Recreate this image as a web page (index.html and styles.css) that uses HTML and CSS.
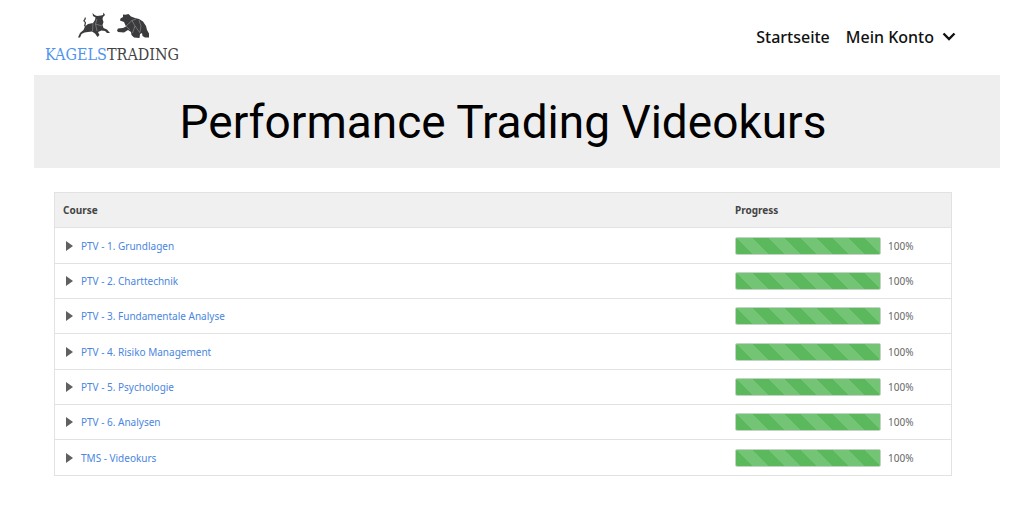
FILE: index.html
```html
<!DOCTYPE html>
<html lang="de">
<head>
<meta charset="utf-8">
<title>Performance Trading Videokurs</title>
<meta name="viewport" content="width=device-width, initial-scale=1">
<link rel="stylesheet" href="styles.css">
</head>
<body>
<div class="page">
  <header class="site-header">
    <a class="logo" href="#">
      <svg class="logo-mark" viewBox="0 0 84 34" aria-hidden="true">
        <g fill="#3b3b3d">
          <path d="M6 29.500 8 25 11.500 22 13 18.500 16 16 21 15 23 12 23.500 9.500 21 8 20.500 5 22.500 7 25 8 29 7.500 31 7 31.500 4.500 33 7 31 9 30.500 11 31.500 14 30.500 17 31.500 20 35 21.500 38 25 35 25 33 23 29.500 22.500 26 24 27.500 27 25.500 29 23 25.500 20 23.500 16 24 12.500 24.500 9.500 26 8 29.500Z"/>
          <path d="M14 18C10.500 18.500 15.500 15 12.500 13.500 10.500 12 14.500 12 13 9.500" fill="none" stroke="#3b3b3d" stroke-width="1.200"/>
          <path d="M45 22.500 46 20.500 51 20 54 18.500 52 14 48 12.500 48.500 10.500 51 9 51 6.500 53.500 6.800 56.500 6 59 8.500 63 10 67 11 71 13.500 74 18 75 22 77 25.500 77 29.500 73 29.500 70.500 28 70 25 68 26 67.500 30 62 29.500 59.500 27 59 24 56 22 52 24.500 46 24Z"/>
        </g>
        <g fill="none" stroke="#a8a8a8" stroke-width=".5">
          <path d="M21 15 20.500 23M25 11 23.500 16 25 23M23.500 16 30 18"/>
          <path d="M54 18 60 12.500 64 11M60 12.500 63 18 60.500 25M63 18 68 25M67 12 69 18 68 24M54 18 58 22"/>
        </g>
      </svg>
      <span class="logo-text"><span class="logo-accent">KAGELS</span>TRADING</span>
    </a>
    <nav class="menu" aria-label="Hauptmenü">
      <a class="menu-item" href="#">Startseite</a>
      <button class="menu-item" type="button" aria-haspopup="true">Mein Konto
        <svg class="chevron" viewBox="0 0 14 10" aria-hidden="true"><path d="M1.500 1.500 7 7 12.500 1.500"/></svg>
      </button>
    </nav>
  </header>

  <h1 class="banner">Performance Trading Videokurs</h1>

  <main class="content">
    <table class="courses">
      <thead>
        <tr><th class="col-course" scope="col">Course</th><th scope="col">Progress</th></tr>
      </thead>
      <tbody>
        <tr><td><a class="course" href="#">PTV - 1. Grundlagen</a></td><td><div class="progress"><div class="track"><div class="bar" style="width:100%"></div></div>100%</div></td></tr>
        <tr><td><a class="course" href="#">PTV - 2. Charttechnik</a></td><td><div class="progress"><div class="track"><div class="bar" style="width:100%"></div></div>100%</div></td></tr>
        <tr><td><a class="course" href="#">PTV - 3. Fundamentale Analyse</a></td><td><div class="progress"><div class="track"><div class="bar" style="width:100%"></div></div>100%</div></td></tr>
        <tr><td><a class="course" href="#">PTV - 4. Risiko Management</a></td><td><div class="progress"><div class="track"><div class="bar" style="width:100%"></div></div>100%</div></td></tr>
        <tr><td><a class="course" href="#">PTV - 5. Psychologie</a></td><td><div class="progress"><div class="track"><div class="bar" style="width:100%"></div></div>100%</div></td></tr>
        <tr><td><a class="course" href="#">PTV - 6. Analysen</a></td><td><div class="progress"><div class="track"><div class="bar" style="width:100%"></div></div>100%</div></td></tr>
        <tr><td><a class="course" href="#">TMS - Videokurs</a></td><td><div class="progress"><div class="track"><div class="bar" style="width:100%"></div></div>100%</div></td></tr>
      </tbody>
    </table>
  </main>
</div>
</body>
</html>
```
FILE: styles.css
```css
* {
  box-sizing: border-box;
}

body {
  margin: 0;
  background: #fff;
  color: #444;
  font-family: "Noto Sans", "Open Sans", sans-serif;
  font-size: 10px;
  line-height: 16px;
}

a {
  color: inherit;
  text-decoration: none;
}

.page {
  padding: 0 30px 0 34px;
}

.site-header {
  display: flex;
  justify-content: space-between;
  align-items: flex-start;
  padding: 8px 44px 9px 11px;
}

.logo {
  display: flex;
  flex-direction: column;
  gap: 2px;
  color: #444;
  font-family: "DejaVu Serif Condensed", "DejaVu Serif", serif;
  font-size: 16px;
  line-height: 22px;
}

.logo-mark {
  width: 84px;
  height: 34px;
  margin-left: 27px;
}

.logo-accent {
  color: #4f94ec;
}

.menu {
  display: flex;
  gap: 16px;
  padding-top: 17px;
}

.menu-item {
  display: flex;
  align-items: center;
  gap: 8px;
  padding: 0;
  border: 0;
  background: none;
  color: #111;
  font-family: "Noto Sans", "Open Sans", sans-serif;
  font-size: 16px;
  font-weight: 500;
  line-height: 24px;
}

.chevron {
  width: 14px;
  height: 10px;
  fill: none;
  stroke: #111;
  stroke-width: 2.4;
}

.banner {
  margin: 0;
  padding: 19px 28px 18px 0;
  background: #eee;
  color: #000;
  font-family: Roboto, sans-serif;
  font-size: 46px;
  font-weight: 400;
  line-height: 56px;
  text-align: center;
}

.content {
  padding: 24px 48px 30px 20px;
}

.courses {
  width: 100%;
  border: 1px solid #e2e2e2;
  border-spacing: 0;
}

.courses th {
  height: 34px;
  padding: 0 8px;
  background: #f0f0f0;
  color: #444;
  font-weight: 700;
  text-align: left;
}

.col-course {
  width: 75%;
}

.courses td {
  height: 35px;
  padding: 0 8px;
  border-top: 1px solid #e2e2e2;
}

.courses tbody tr:nth-child(3n + 1) td {
  height: 36px;
}

.course {
  display: flex;
  align-items: center;
  gap: 8px;
  padding-left: 3px;
  color: #4a86e0;
}

.course::before {
  content: "";
  border-style: solid;
  border-width: 5px 0 5px 7px;
  border-color: transparent transparent transparent #606060;
}

.progress {
  display: flex;
  align-items: center;
  gap: 7px;
  color: #666;
}

.track {
  width: 146px;
  height: 18px;
  border: 1px solid #c4d4c4;
  border-radius: 2px;
  background: #eee;
  overflow: hidden;
}

.bar {
  height: 100%;
  background-color: #5cb85c;
  background-image: linear-gradient(45deg, #74c476 25%, transparent 25%, transparent 50%, #74c476 50%, #74c476 75%, transparent 75%);
  background-size: 32px 32px;
}
```
